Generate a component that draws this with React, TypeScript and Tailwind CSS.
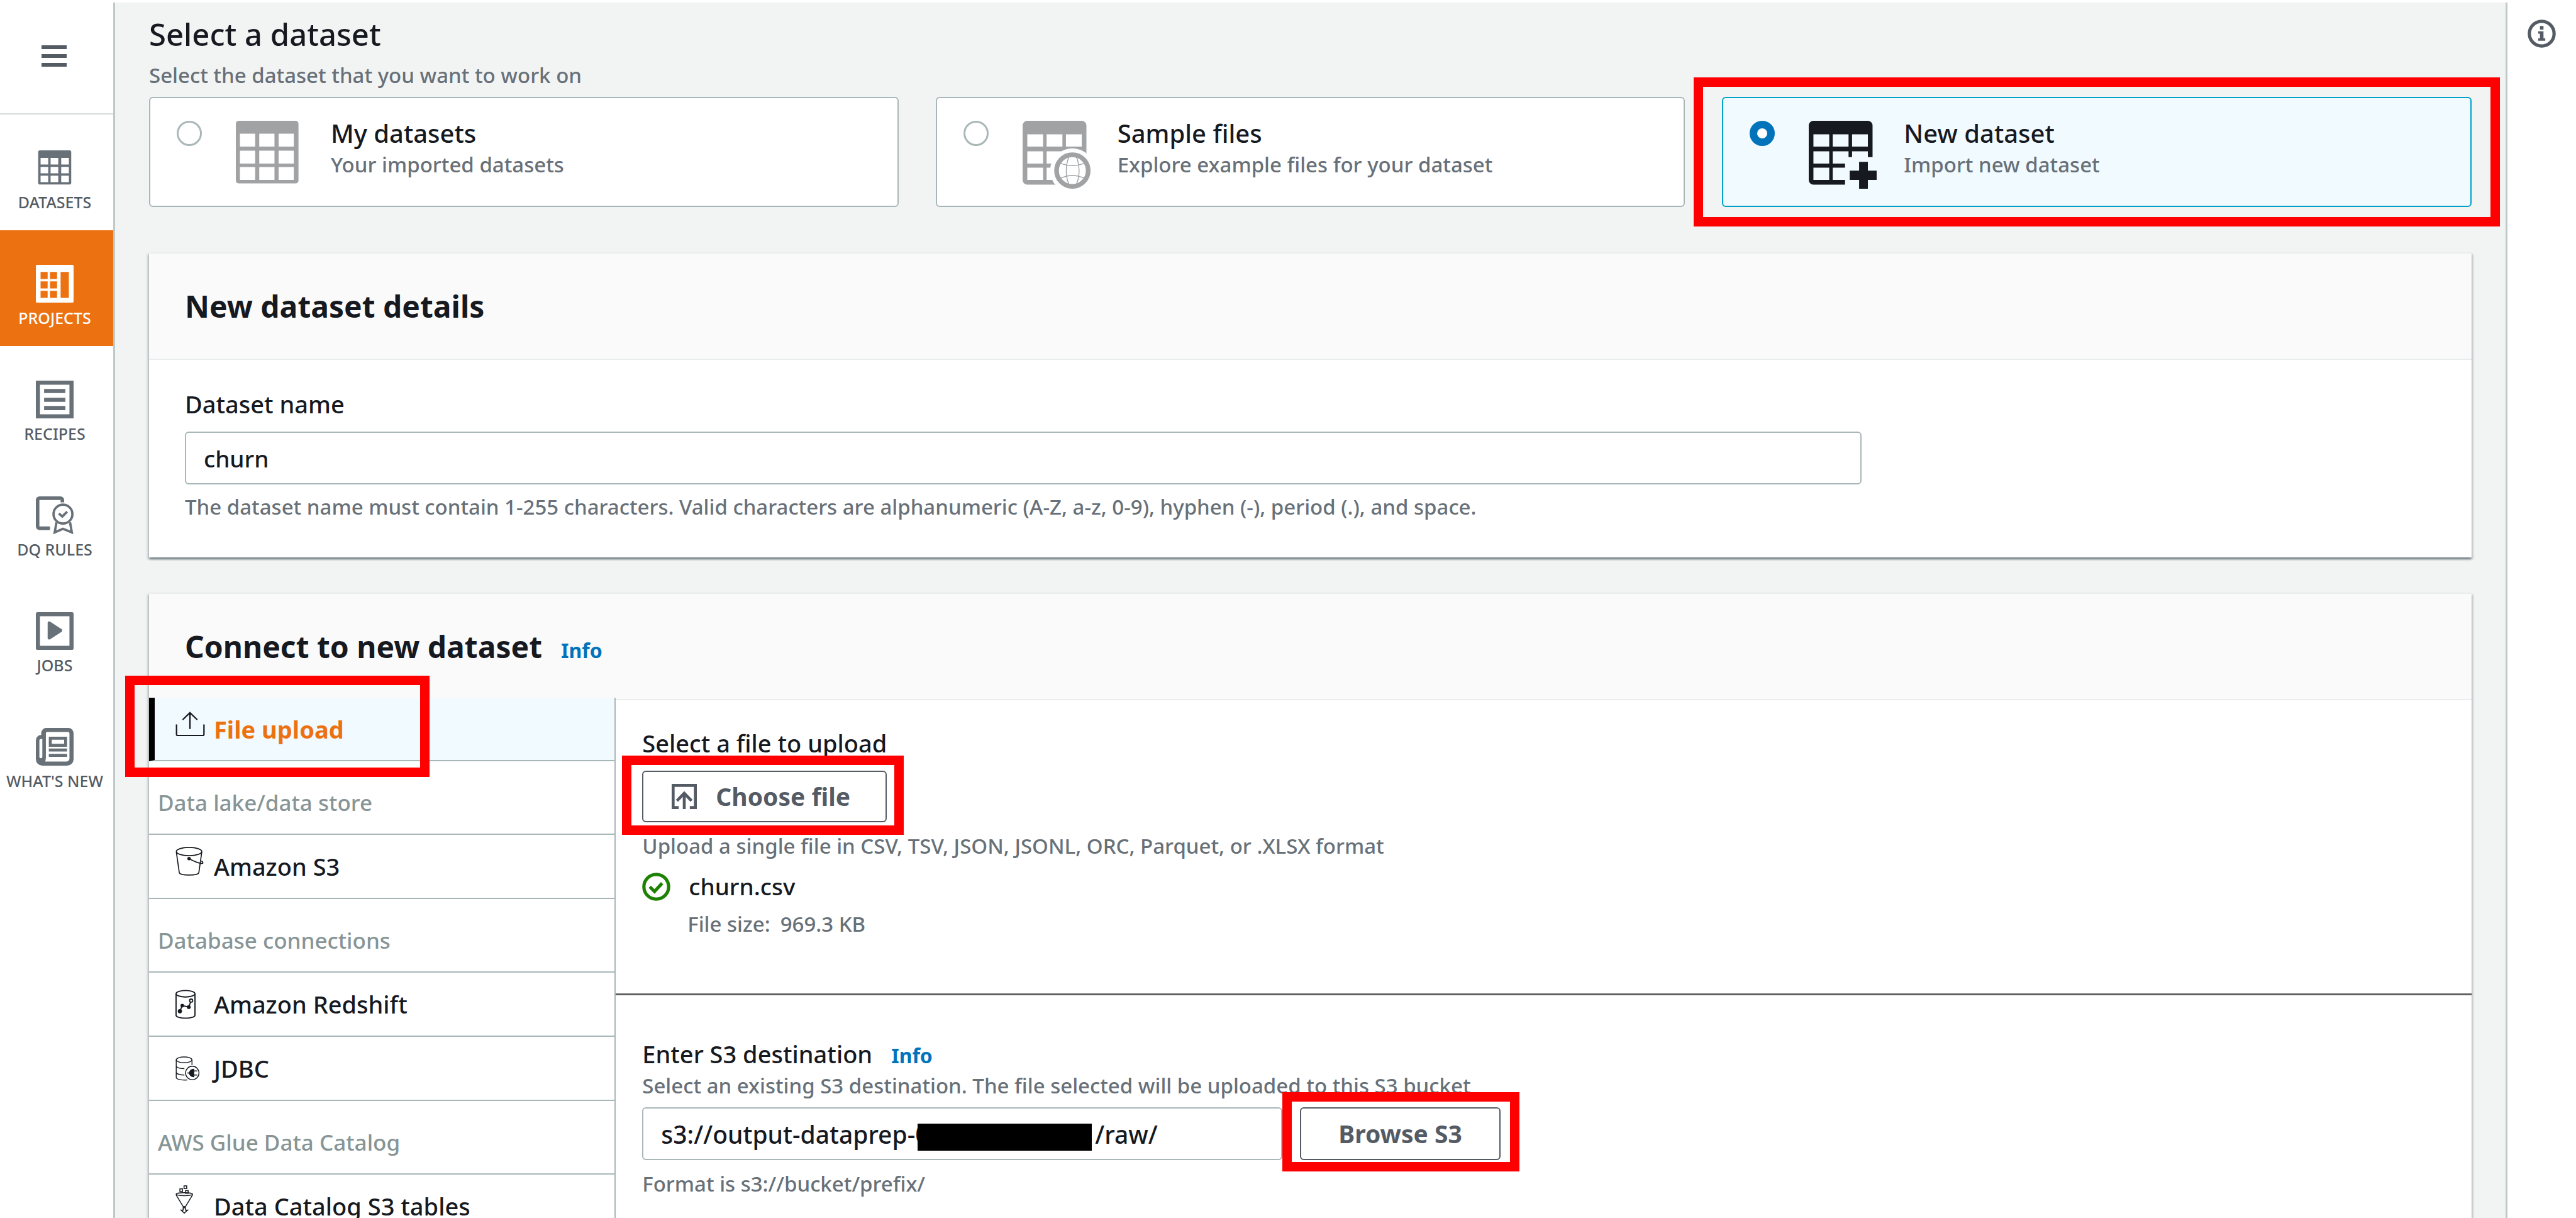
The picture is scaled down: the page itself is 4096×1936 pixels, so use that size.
import React from "react";

const rect = (x: number, y: number, w: number, h: number) => `M${x} ${y}h${w}v${h}h${-w}z`;
const cells = (xs: number[], ys: number[], w: number, h: number) =>
  ys.map((y) => xs.map((x) => rect(x, y, w, h)).join("")).join("");

/* ---------- Navigation icons ---------- */

const DatasetsIcon = () => (
  <svg viewBox="0 0 64 64" className="size-[60px]" fill="currentColor" fillRule="evenodd" aria-hidden="true">
    <path d={"M7 2h50a3 3 0 0 1 3 3v52a3 3 0 0 1-3 3H7a3 3 0 0 1-3-3V5a3 3 0 0 1 3-3z" + cells([8, 25, 43], [15, 30, 45], 13, 11)} />
  </svg>
);

const ProjectsIcon = () => (
  <svg viewBox="0 0 64 64" className="size-[60px]" fill="currentColor" fillRule="evenodd" aria-hidden="true">
    <path d={"M2 0h60a2 2 0 0 1 2 2v60a2 2 0 0 1-2 2H2a2 2 0 0 1-2-2V2a2 2 0 0 1 2-2z" + cells([8, 24], [12, 28, 44], 12, 12) + rect(42, 12, 14, 44)} />
  </svg>
);

const RecipesIcon = () => (
  <svg viewBox="0 0 64 64" className="size-[60px]" fill="currentColor" fillRule="evenodd" aria-hidden="true">
    <path d={rect(0, 0, 64, 64) + rect(7, 7, 50, 50)} />
    <path d={rect(14, 14, 36, 7) + rect(14, 29, 36, 7) + rect(14, 43, 36, 7)} />
  </svg>
);

const RulesIcon = () => (
  <svg viewBox="0 0 64 64" className="size-[60px]" fill="none" stroke="currentColor" aria-hidden="true">
    <path d="M45 10V6a3 3 0 0 0-3-3H6a3 3 0 0 0-3 3v45a3 3 0 0 0 3 3h18" strokeWidth="6" />
    <circle cx="46" cy="30" r="16" strokeWidth="4" />
    <path d="M39 29l6 5 8-8" strokeWidth="4" />
    <path d="M35 44l-3 17 14-6 15 6-3-17" strokeWidth="4" />
  </svg>
);

const JobsIcon = () => (
  <svg viewBox="0 0 64 64" className="size-[60px]" fill="currentColor" fillRule="evenodd" aria-hidden="true">
    <path d={"M3 0h58a3 3 0 0 1 3 3v58a3 3 0 0 1-3 3H3a3 3 0 0 1-3-3V3a3 3 0 0 1 3-3z" + rect(7, 7, 50, 50)} />
    <path d="M20 18c0-2 2-3 4-2l20 13c1 1 1 3 0 4L24 46c-2 1-4 0-4-2z" />
  </svg>
);

const NewsIcon = () => (
  <svg viewBox="0 0 64 64" className="size-[60px]" fill="currentColor" fillRule="evenodd" aria-hidden="true">
    <path d="M9 9a9 9 0 0 1 9-9h37a9 9 0 0 1 9 9v44a11 11 0 0 1-11 11H11A11 11 0 0 1 0 53V21a9 9 0 0 1 9-9zM19 7a2 2 0 0 0-2 2v42l-1 6h36a5 5 0 0 0 5-5V9a2 2 0 0 0-2-2zM8 19a2 2 0 0 0-2 2v28a2 2 0 0 0 5 0V19z" />
    <path d={rect(22, 15, 31, 17) + rect(27, 20, 21, 7) + rect(22, 35, 31, 5) + rect(22, 44, 31, 5)} />
  </svg>
);

/* ---------- Source card icons ---------- */

const TableIcon = () => (
  <svg viewBox="0 0 116 116" className="size-[108px] text-[#a1a2a4]" fill="currentColor" fillRule="evenodd" aria-hidden="true">
    <path d={"M5 0h97a5 5 0 0 1 5 5v97a5 5 0 0 1-5 5H5a5 5 0 0 1-5-5V5a5 5 0 0 1 5-5z" + cells([7, 40, 73], [22, 51, 79], 26, 22)} />
  </svg>
);

const gridPath = "M8 0h93a8 8 0 0 1 8 8v93a8 8 0 0 1-8 8H8a8 8 0 0 1-8-8V8a8 8 0 0 1 8-8z" + cells([8, 41, 74], [23, 52, 80], 27, 21);

const SampleIcon = () => (
  <svg viewBox="0 0 116 116" className="size-[108px] text-[#a1a2a4]" fill="currentColor" fillRule="evenodd" aria-hidden="true">
    <path d={gridPath} />
    <circle cx="85" cy="85" r="38" fill="white" />
    <g fill="none" stroke="currentColor">
      <circle cx="85" cy="85" r="27" strokeWidth="8" />
      <path d="M79 62c-6 14-6 32 0 46M92 62c6 14 6 32 0 46M65 73q20 7 40 0M65 98q20-9 40 0" strokeWidth="1.5" />
    </g>
  </svg>
);

const NewIcon = () => (
  <svg viewBox="0 0 116 116" className="size-[108px] text-[#16191f]" fill="currentColor" fillRule="evenodd" aria-hidden="true">
    <clipPath id="new-grid">
      <path d="M0 0h116v62H62v54H0z" />
    </clipPath>
    <path d={gridPath} clipPath="url(#new-grid)" />
    <path d="M86 70h15v15h15v16h-15v15H86v-15H70V85h16z" />
  </svg>
);

/* ---------- Connection icons ---------- */

const UploadIcon = () => (
  <svg viewBox="0 0 50 42" className="mb-4 h-[39px] w-[47px]" fill="none" stroke="#16191f" strokeWidth="2.4" aria-hidden="true">
    <path d="M1.500 22v17a2 2 0 0 0 2 2h43a2 2 0 0 0 2-2V22M24.500 30V2M12 14L24.500 2 37 14" />
  </svg>
);

const BucketIcon = () => (
  <svg viewBox="0 0 50 50" className="mb-4 size-[47px]" fill="none" stroke="#16191f" strokeWidth="1.800" aria-hidden="true">
    <ellipse cx="23" cy="8" rx="21.500" ry="7" />
    <path d="M1.500 9l5 35c2 5 31 5 33 0l5-35" />
    <circle cx="23" cy="20" r="2" fill="#16191f" />
    <path d="M23 20c7 4 14 7 20 8 5 1 4-2 1-4" />
  </svg>
);

const RedshiftIcon = () => (
  <svg viewBox="0 0 50 50" className="size-[47px]" fill="none" stroke="#16191f" strokeWidth="2" aria-hidden="true">
    <ellipse cx="17" cy="7" rx="16" ry="5.500" />
    <path d="M1 7v36c0 7 32 7 32 0V7M7.500 36.500l4-9.500 11 2.500 4-11" />
    <circle cx="7.500" cy="36.500" r="2.600" fill="#16191f" />
    <circle cx="11.500" cy="27" r="2" fill="#16191f" />
    <circle cx="22.500" cy="29.500" r="2.300" fill="#16191f" />
    <circle cx="26.500" cy="18.500" r="2.600" fill="white" />
  </svg>
);

const JdbcIcon = () => (
  <svg viewBox="0 0 50 42" className="h-[39px] w-[47px]" fill="none" stroke="#16191f" strokeWidth="1.500" aria-hidden="true">
    <ellipse cx="14.500" cy="6" rx="13.500" ry="5" />
    <path d="M1 6v30c0 4 12 5 19 4.500M28 6v9M1 17c2 3 8 4 14 4M1 28c2 3 8 4 14 4" />
    <circle cx="28.500" cy="28.500" r="11.500" />
    <path d="M20 28.500h3c2-5 4-6.500 8-6.500v13c-4 0-6-1.500-8-6.500" fill="#16191f" />
    <path d="M31 25h6M31 32h6" />
  </svg>
);

const FunnelIcon = () => (
  <svg viewBox="0 0 50 50" className="mb-5 size-[47px]" fill="none" stroke="#16191f" strokeWidth="1.600" aria-hidden="true">
    <ellipse cx="15" cy="15" rx="14" ry="2.500" />
    <path d="M1 16l12 20h4l12-20M13 38v4H9.500l5.500 5 5.500-5H17v-4z" />
    <rect x="14.500" y="1" width="4.500" height="4.500" />
    <rect x="7.500" y="6" width="4.500" height="4.500" />
    <rect x="17" y="9" width="4.500" height="4.500" />
  </svg>
);

const ChooseIcon = () => (
  <svg viewBox="0 0 43 43" className="size-10" fill="none" stroke="currentColor" strokeWidth="5" aria-hidden="true">
    <path d="M12 40.500H2.500V2.500h38v38H31M21.500 43V16M9 29l12.500-13L34 29" />
  </svg>
);

const CheckIcon = () => (
  <svg viewBox="0 0 48 48" className="size-[45px] text-[#1d8102]" fill="none" stroke="currentColor" strokeWidth="5.500" aria-hidden="true">
    <circle cx="24" cy="24" r="21" />
    <path d="M13 24l8 8 13-14" />
  </svg>
);

const InfoIcon = () => (
  <svg viewBox="0 0 48 48" className="size-[45px]" fill="currentColor" aria-hidden="true">
    <circle cx="24" cy="24" r="21" fill="none" stroke="currentColor" strokeWidth="5.500" />
    <path d="M21 11h6v6h-6zM18 20h9v12h3v4H18v-4h3v-8h-3z" />
  </svg>
);

/* ---------- Data ---------- */

const nav = [
  { label: "DATASETS", icon: <DatasetsIcon /> },
  { label: "PROJECTS", icon: <ProjectsIcon />, active: true },
  { label: "RECIPES", icon: <RecipesIcon /> },
  { label: "DQ RULES", icon: <RulesIcon /> },
  { label: "JOBS", icon: <JobsIcon /> },
  { label: "WHAT'S NEW", icon: <NewsIcon /> },
];

const sources = [
  { title: "My datasets", text: "Your imported datasets", icon: <TableIcon /> },
  { title: "Sample files", text: "Explore example files for your dataset", icon: <SampleIcon /> },
  { title: "New dataset", text: "Import new dataset", icon: <NewIcon />, selected: true },
];

const s3Path = "s3://output-dataprep-0" + "\u00a0".repeat(26) + "/raw/";

/* ---------- Building blocks ---------- */

const Highlight = ({ className }: { className: string }) => (
  <span aria-hidden="true" className={`pointer-events-none absolute z-10 border-[15px] border-[#ff0000] ${className}`} />
);

const InfoLink = () => (
  <a href="#info" className="text-[32px] font-bold leading-10 text-[#0073bb]">
    Info
  </a>
);

const Panel = ({ title, info, children }: { title: string; info?: boolean; children: React.ReactNode }) => (
  <section className="border-t-2 border-[#eaeded] bg-white shadow-[0_3px_3px_rgba(0,28,36,0.4),3px_3px_3px_rgba(0,28,36,0.12),-3px_3px_3px_rgba(0,28,36,0.12)]">
    <header className="flex h-[167px] items-center bg-[#fafafa] px-[57px]">
      <div className="flex items-baseline gap-[30px]">
        <h2 className="text-[48px] font-bold leading-[60px]">{title}</h2>
        {info && <InfoLink />}
      </div>
    </header>
    {children}
  </section>
);

const Group = ({ children }: { children: React.ReactNode }) => (
  <h3 className="flex h-[117px] items-center border-b-2 border-[#aab7b8] px-3.5 pt-4 text-[35px] leading-[44px] text-[#879596]">
    {children}
  </h3>
);

const Item = ({ icon, children }: { icon: React.ReactNode; children: React.ReactNode }) => (
  <button type="button" className="flex h-[102px] w-full items-center gap-3.5 border-b-2 border-[#aab7b8] pl-[42px] text-left text-[38px] leading-[48px]">
    {icon}
    {children}
  </button>
);

export default function App() {
  return (
    <div className="flex h-screen overflow-hidden border-t-4 border-white bg-white font-['Noto_Sans',sans-serif] font-medium text-[#16191f]">
      <nav className="w-[183px] shrink-0 border-r-[3px] border-[#c0c9ca] text-[#687078]">
        <div className="flex h-[178px] items-center justify-center border-b-2 border-[#d5dbdb] pr-2 pb-1.5">
          <button type="button" aria-label="Open menu" className="text-[#545b64]">
            <svg viewBox="0 0 40 34" className="h-[34px] w-10" fill="currentColor" aria-hidden="true">
              <path d="M0 0h40v6H0zM0 14h40v6H0zM0 28h40v6H0z" />
            </svg>
          </button>
        </div>
        {nav.map((n) => (
          <a
            key={n.label}
            href="#nav"
            className={`flex h-[184px] flex-col items-center gap-2 pt-[55px] pr-1.5 ${n.active ? "bg-[#ec7211] text-white" : ""}`}
          >
            {n.icon}
            <span className={`text-[25px] leading-8 whitespace-nowrap ${n.active ? "" : "text-[#545b64]"}`}>{n.label}</span>
          </a>
        ))}
      </nav>

      <main className="min-w-0 flex-1 bg-[#f2f4f4] px-[54px] pt-5">
        <h1 className="text-[49px] leading-[60px]">Select a dataset</h1>
        <p className="mt-4 text-[33px] leading-10 text-[#687078]">Select the dataset that you want to work on</p>

        <div className="mt-3.5 grid grid-cols-3 gap-[59px]">
          {sources.map((s) => (
            <label
              key={s.title}
              className={`relative flex h-[175px] items-start rounded-md border-2 pl-[42px] ${s.selected ? "border-[#00a1c9] bg-[#f1faff]" : "border-[#aab7b8] bg-white"}`}
            >
              <input
                type="radio"
                name="source"
                defaultChecked={s.selected}
                className="mt-9 size-10 appearance-none rounded-full border-[3px] border-[#aab7b8] bg-white checked:border-[12px] checked:border-[#0073bb]"
              />
              <span className="mt-9 ml-[54px]">{s.icon}</span>
              <span className="mt-[30px] ml-[43px] flex flex-col gap-1">
                <span className="text-[40px] leading-[52px]">{s.title}</span>
                <span className="text-[33px] leading-10 text-[#687078]">{s.text}</span>
              </span>
              {s.selected && <Highlight className="-inset-x-[47px] -inset-y-[33px]" />}
            </label>
          ))}
        </div>

        <div className="mt-[72px] flex flex-col gap-14">
          <Panel title="New dataset details">
            <div className="border-t-2 border-[#eaeded] px-[57px] pt-[46px] pb-[60px]">
              <label htmlFor="dataset-name" className="block text-[38px] leading-[48px]">
                Dataset name
              </label>
              <input
                id="dataset-name"
                defaultValue="churn"
                className="mt-5 block h-[84px] w-[74.5%] rounded-md border-2 border-[#aab7b8] bg-white px-7 text-[37px]"
              />
              <p className="mt-4 text-[33px] leading-10 text-[#687078]">
                The dataset name must contain 1-255 characters. Valid characters are alphanumeric (A-Z, a-z, 0-9), hyphen (-), period (.), and space.
              </p>
            </div>
          </Panel>

          <Panel title="Connect to new dataset" info>
            <div className="flex">
              <div className="-mt-0.5 w-[20.1%] shrink-0 border-r-2 border-[#aab7b8]">
                <div className="relative">
                  <button
                    type="button"
                    className="flex h-[101px] w-full items-center gap-3.5 border-b-2 border-l-[9px] border-b-[#aab7b8] border-l-black bg-[#f1faff] pl-[33px] text-left text-[38px] font-bold leading-[48px] text-[#ec7211]"
                  >
                    <UploadIcon />
                    File upload
                  </button>
                  <Highlight className="-top-[35px] -left-[38px] h-[161px] w-[484px]" />
                </div>
                <Group>Data lake/data store</Group>
                <Item icon={<BucketIcon />}>Amazon S3</Item>
                <Group>Database connections</Group>
                <Item icon={<RedshiftIcon />}>Amazon Redshift</Item>
                <Item icon={<JdbcIcon />}>JDBC</Item>
                <Group>AWS Glue Data Catalog</Group>
                <Item icon={<FunnelIcon />}>Data Catalog S3 tables</Item>
              </div>

              <div className="min-w-0 flex-1 border-t-2 border-[#eaeded]">
                <div className="border-b-[3px] border-[#616161] pt-11 pb-[90px] pl-[42px]">
                  <h3 className="text-[38px] leading-[48px]">Select a file to upload</h3>
                  <div className="relative mt-5 w-fit">
                    <button
                      type="button"
                      className="flex h-[82px] items-center gap-[30px] rounded-md border-2 border-[#545b64] bg-white pr-14 pl-[45px] text-[39px] font-bold text-[#545b64]"
                    >
                      <ChooseIcon />
                      Choose file
                    </button>
                    <Highlight className="-top-6 -right-[27px] -bottom-5 -left-8" />
                  </div>
                  <p className="mt-[18px] text-[33px] leading-10 text-[#687078]">
                    Upload a single file in CSV, TSV, JSON, JSONL, ORC, Parquet, or .XLSX format
                  </p>
                  <div className="mt-5 flex items-center gap-[29px] text-[37px] leading-[48px]">
                    <CheckIcon />
                    churn.csv
                  </div>
                  <p className="mt-4 flex gap-4 pl-[72px] text-[33px] leading-10 text-[#687078]">
                    <span>File size:</span>
                    <span>969.3 KB</span>
                  </p>
                </div>

                <div className="pt-[69px] pb-14 pl-[42px]">
                  <div className="flex items-baseline gap-[30px]">
                    <label htmlFor="s3-path" className="text-[38px] leading-[48px]">
                      Enter S3 destination
                    </label>
                    <InfoLink />
                  </div>
                  <p className="mt-[7px] text-[33px] leading-10 text-[#687078]">
                    Select an existing S3 destination. The file selected will be uploaded to this S3 bucket
                  </p>
                  <div className="mt-3.5 flex gap-7">
                    <div className="relative w-[35%]">
                      <input
                        id="s3-path"
                        defaultValue={s3Path}
                        className="h-[84px] w-full rounded-md border-2 border-[#aab7b8] bg-white px-7 text-[39px]"
                      />
                      <span aria-hidden="true" className="absolute top-[26px] left-[438px] h-[43px] w-[277px] bg-black" />
                    </div>
                    <div className="relative">
                      <button
                        type="button"
                        className="h-[84px] rounded-md border-2 border-[#545b64] bg-white px-[59px] text-[39px] font-bold text-[#545b64]"
                      >
                        Browse S3
                      </button>
                      <Highlight className="-top-6 -right-[30px] -bottom-[18px] -left-7" />
                    </div>
                  </div>
                  <p className="mt-[18px] text-[33px] leading-10 text-[#687078]">Format is s3://bucket/prefix/</p>
                </div>
              </div>
            </div>
          </Panel>
        </div>
      </main>

      <aside className="flex w-28 shrink-0 justify-center border-l-[3px] border-[#c0c9ca] pt-[27px]">
        <button type="button" aria-label="Open help panel" className="h-fit text-[#545b64]">
          <InfoIcon />
        </button>
      </aside>
    </div>
  );
}
